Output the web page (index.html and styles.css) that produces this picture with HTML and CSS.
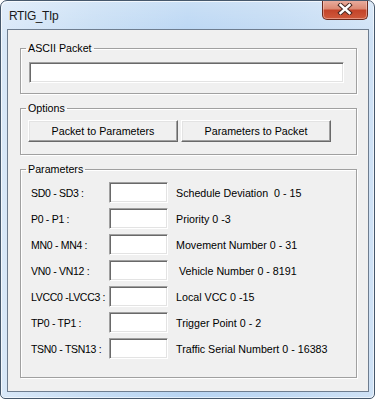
FILE: index.html
```html
<!DOCTYPE html>
<html>
<head>
<meta charset="utf-8">
<link rel="stylesheet" href="styles.css">
</head>
<body>
<div class="window">
  <div class="titlebar">
    <span class="title">RTIG_TIp</span>
    <div class="close">
      <svg width="16" height="12" viewBox="0 0 16 12">
        <path d="M3.5 2 L12.5 10 M12.5 2 L3.5 10" stroke="#4a2a24" stroke-width="4.4" stroke-linecap="square" fill="none"/>
        <path d="M3.5 2 L12.5 10 M12.5 2 L3.5 10" stroke="#ffffff" stroke-width="2.4" stroke-linecap="square" fill="none"/>
      </svg>
    </div>
  </div>
  <div class="client">
    <fieldset class="group">
      <legend>ASCII Packet</legend>
      <div class="inner inner-ascii">
        <div class="edit edit-wide"></div>
      </div>
    </fieldset>
    <fieldset class="group group-gap">
      <legend>Options</legend>
      <div class="inner inner-options">
        <div class="btn">Packet to Parameters</div>
        <div class="btn">Parameters to Packet</div>
      </div>
    </fieldset>
    <fieldset class="group group-gap">
      <legend>Parameters</legend>
      <div class="inner inner-params">
        <div class="row"><span class="lbl">SD0 - SD3 :</span><div class="edit"></div><span class="desc">Schedule Deviation&nbsp; 0 - 15</span></div>
        <div class="row"><span class="lbl">P0 - P1 :</span><div class="edit"></div><span class="desc">Priority 0 -3</span></div>
        <div class="row"><span class="lbl">MN0 - MN4 :</span><div class="edit"></div><span class="desc">Movement Number 0 - 31</span></div>
        <div class="row"><span class="lbl">VN0 - VN12 :</span><div class="edit"></div><span class="desc">&nbsp;Vehicle Number 0 - 8191</span></div>
        <div class="row"><span class="lbl">LVCC0 -LVCC3 :</span><div class="edit"></div><span class="desc">Local VCC 0 -15</span></div>
        <div class="row"><span class="lbl">TP0 - TP1 :</span><div class="edit"></div><span class="desc">Trigger Point 0 - 2</span></div>
        <div class="row"><span class="lbl">TSN0 - TSN13 :</span><div class="edit"></div><span class="desc">Traffic Serial Numbert 0 - 16383</span></div>
      </div>
    </fieldset>
  </div>
</div>
</body>
</html>
```
FILE: styles.css
```css
html, body {
  margin: 0;
  padding: 0;
  background: #ffffff;
}

body {
  width: 375px;
  height: 399px;
  overflow: hidden;
  font-family: "Liberation Sans", Arial, sans-serif;
  font-size: 10.7px;
  color: #000;
}

.window {
  box-sizing: border-box;
  width: 375px;
  height: 399px;
  border: 1px solid #46586c;
  border-radius: 7px 7px 5px 5px;
  background:
    linear-gradient(to bottom, rgba(255,255,255,0.25), rgba(255,255,255,0) 40px),
    linear-gradient(to right, #d9e8f8 0%, #c6ddf4 25%, #b8d5f3 50%, #c0d9f3 75%, #cfe2f6 100%);
  box-shadow: inset 1px 1px 0 rgba(255,255,255,0.7), inset -1px -1px 0 rgba(255,255,255,0.6);
  display: flex;
  flex-direction: column;
  overflow: hidden;
}

.titlebar {
  height: 28px;
  display: flex;
  align-items: flex-start;
}

.title {
  margin-left: 8px;
  margin-top: 8px;
  font-size: 12px;
  line-height: 14px;
  letter-spacing: -0.4px;
  color: #1a1a1a;
}

.close {
  margin-left: auto;
  margin-right: 6px;
  margin-top: -1px;
  width: 46px;
  height: 20px;
  box-sizing: border-box;
  border: 1px solid #6b2a1e;
  border-top: none;
  border-radius: 0 0 5px 5px;
  background: linear-gradient(to bottom, #eab0a2 0%, #dc8a74 45%, #c4442a 55%, #cf5a3c 100%);
  box-shadow: inset 0 0 0 1px rgba(255,220,210,0.45);
  display: flex;
  align-items: center;
  justify-content: center;
}

.close svg {
  display: block;
  margin-top: -1px;
}

.client {
  margin: 0 5px 0 6px;
  height: 363px;
  box-sizing: border-box;
  border: 1px solid #6e7d8f;
  background: #f0f0f0;
  padding: 12px 11px 0 12px;
}

.group {
  margin: 0;
  padding: 0;
  min-inline-size: 0;
  border: 1px solid #a0a0a0;
  box-shadow: 1px 1px 0 #ffffff, inset 1px 1px 0 #ffffff;
}

.group-gap {
  margin-top: 8px;
}

.group legend {
  margin-left: 5px;
  padding: 0 2px;
  font-size: 10.7px;
  line-height: 13px;
}

.inner-ascii {
  padding: 7px 11px 10px 8px;
}

.inner-options {
  padding: 5px 0 12px 7px;
  display: flex;
  gap: 3px;
}

.inner-params {
  padding: 6px 0 18px 10px;
  display: flex;
  flex-direction: column;
  gap: 5px;
}

.edit {
  box-sizing: border-box;
  height: 21px;
  width: 59px;
  flex: none;
  background: #ffffff;
  border-top: 1px solid #a0a0a0;
  border-left: 1px solid #a0a0a0;
  border-right: 1px solid #ffffff;
  border-bottom: 1px solid #ffffff;
  box-shadow: inset 1px 1px 0 #696969, inset -1px -1px 0 #e3e3e3;
}

.edit-wide {
  width: 315px;
}

.btn {
  box-sizing: border-box;
  width: 150px;
  height: 22px;
  background: #f0f0f0;
  border-right: 1px solid #696969;
  border-bottom: 1px solid #696969;
  border-top: 1px solid #ffffff;
  border-left: 1px solid #ffffff;
  box-shadow: inset -1px -1px 0 #a0a0a0, inset 1px 1px 0 #e3e3e3;
  display: flex;
  align-items: center;
  justify-content: center;
  padding-bottom: 1px;
}

.row {
  display: flex;
  align-items: center;
  height: 21px;
}

.lbl {
  width: 78px;
  flex: none;
  font-size: 10.5px;
  letter-spacing: -0.3px;
  white-space: nowrap;
}

.desc {
  margin-left: 8px;
  white-space: nowrap;
}
```
